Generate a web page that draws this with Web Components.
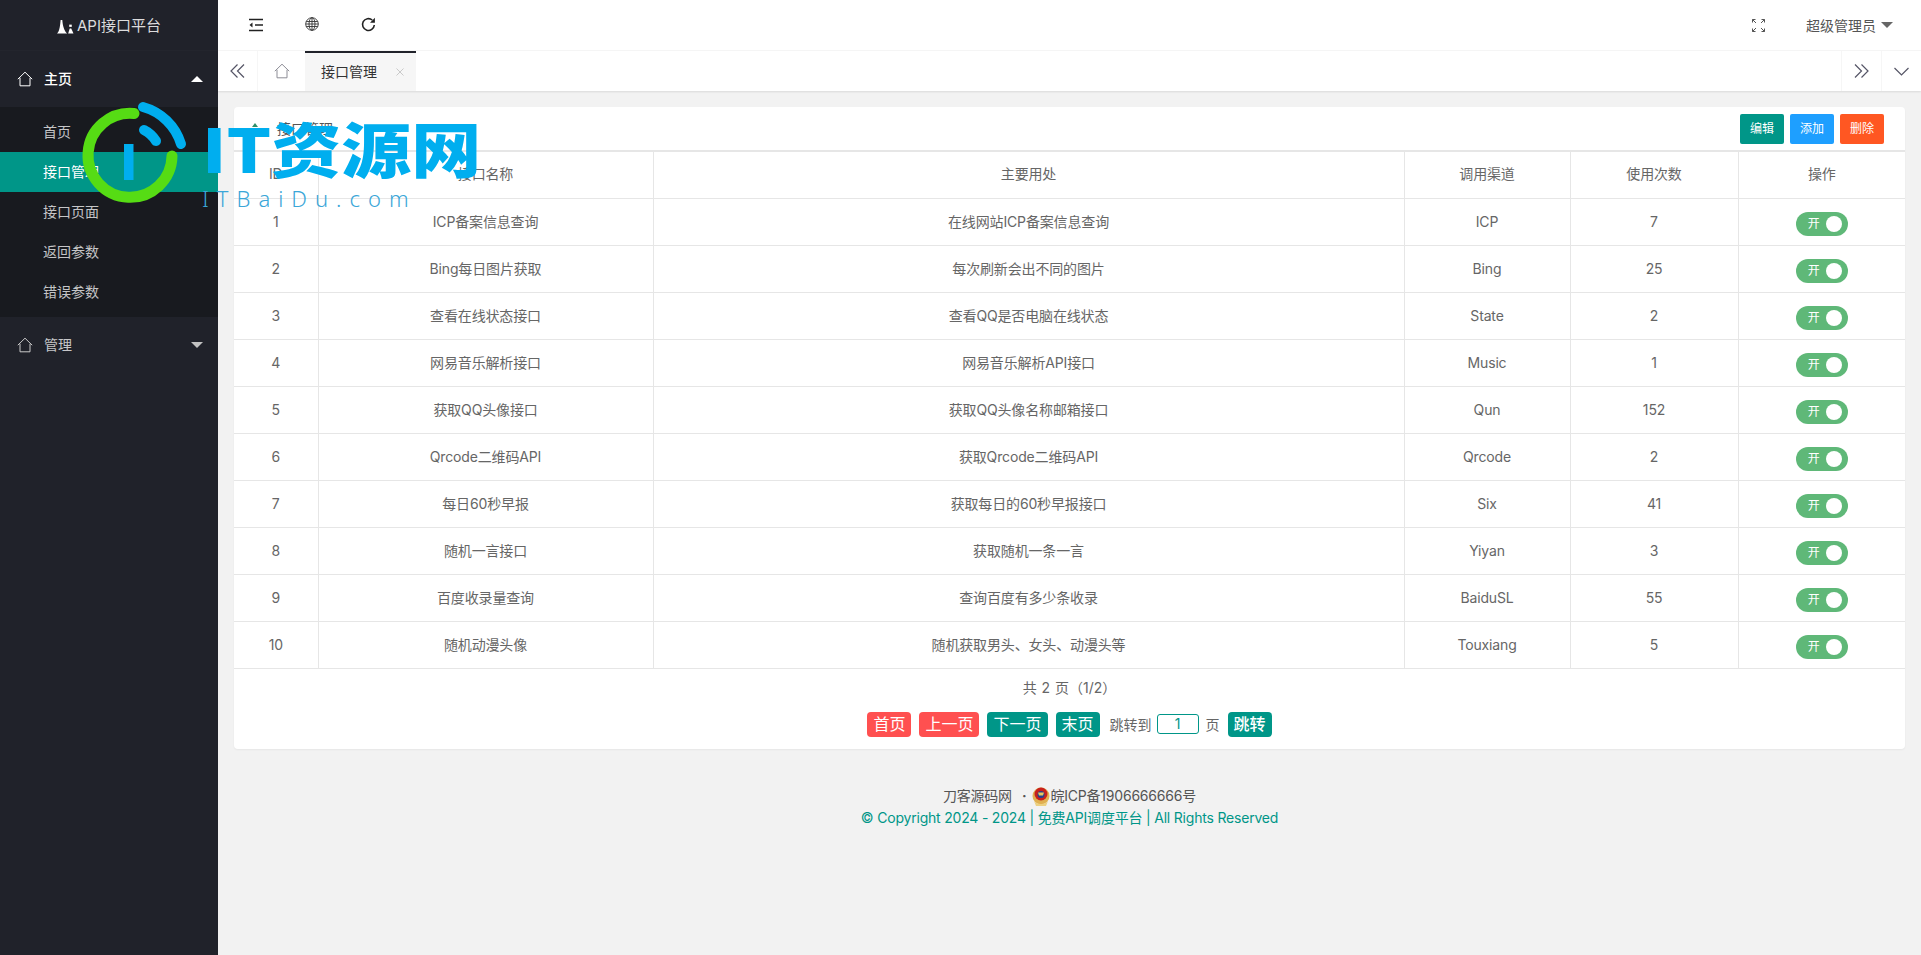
<!doctype html>
<html lang="zh">
<head>
<meta charset="utf-8">
<title>API接口平台</title>
<style>
  html, body { margin: 0; height: 100%; }
  body {
    background: #f2f2f2;
    color: #666;
    font: 14px/1.5 Inter, "Noto Sans CJK SC", "Liberation Sans", sans-serif;
    overflow: hidden;
  }
</style>
</head>
<body>

<template id="admin-shell-template">
  <style>
    :host { display: grid; grid-template-columns: 218px 1fr; height: 955px; }
    main { display: flex; flex-direction: column; min-width: 0; }
  </style>
  <slot name="side"></slot>
  <main><slot></slot></main>
</template>

<template id="side-menu-template">
  <style>
    :host { display: block; background: #20222a; color: #fff; }
    .logo { height: 50px; box-sizing: content-box; display: flex; align-items: center; justify-content: center; gap: 3px; font-size: 15px; color: rgba(255,255,255,.85); border-bottom: 1px solid #23252d; }
    .logo span { padding-top: 2px; }
    svg.logo-mark { width: 17px; height: 15px; margin-top: 3px; }
    .group { height: 56px; display: flex; align-items: center; padding: 0 15px 0 17px; font-size: 14px; color: rgba(255,255,255,.75); }
    .group.open { color: #fff; font-weight: 500; }
    .group svg { width: 16px; height: 16px; margin-right: 11px; }
    .group span { flex: 1; padding-bottom: 2px; }
    .arrow { width: 0; height: 0; border: 6px solid transparent; }
    .up { border-bottom-color: #fff; margin-top: -6px; }
    .down { border-top-color: #c2c2c2; margin-top: 6px; }
    .sub { background: #181a1f; padding: 5px 0; }
    .sub div { height: 40px; line-height: 40px; padding-left: 43px; color: rgba(255,255,255,.75); }
    .sub .on { background: #009688; color: #fff; }
  </style>
  <div class="logo">
    <svg class="logo-mark" viewBox="0 0 16 16" preserveAspectRatio="none" fill="#fff"><path d="M0 15.500C2.500 13 3 6 3.400 1L5 1C5.300 7 7 13 9.500 15.500Z"/><rect x="11.500" y="6" width="2.400" height="2.400"/><path d="M10.500 15.500 12 10 13.400 10 15.500 15.500Z"/></svg>
    <span>API接口平台</span>
  </div>
  <div class="group open">
    <svg viewBox="0 0 16 16" fill="none" stroke="#fff" stroke-width="1"><path d="M.8 8.200 8 1.200l7.200 7M3 6.800v8h10v-8"/></svg>
    <span>主页</span><i class="arrow up"></i>
  </div>
  <div class="sub">
    <div>首页</div><div class="on">接口管理</div><div>接口页面</div><div>返回参数</div><div>错误参数</div>
  </div>
  <div class="group">
    <svg viewBox="0 0 16 16" fill="none" stroke="#c9c9c9" stroke-width="1"><path d="M.8 8.200 8 1.200l7.200 7M3 6.800v8h10v-8"/></svg>
    <span>管理</span><i class="arrow down"></i>
  </div>
</template>

<template id="top-bar-template">
  <style>
    :host { display: flex; height: 50px; background: #fff; align-items: center; border-bottom: 1px solid #f6f6f6; color: #333; }
    svg { display: block; }
    .tool { width: 56px; display: flex; justify-content: center; }
    .left { display: flex; padding-left: 10px; }
    .grow { flex: 1; }
    .user { display: flex; align-items: center; font-size: 14px; color: #555; margin-right: 28px; gap: 5px; }
    .caret { width: 0; height: 0; border: 6px solid transparent; border-top-color: #666; margin-top: 6px; }
    .full { margin-right: 41px; }
  </style>
  <div class="left">
    <div class="tool"><svg width="16" height="16" viewBox="0 0 16 16" fill="none" stroke="#222" stroke-width="1.300"><path d="M1 2.500h14M7 8h8M1 13.500h14"/><path d="M4.500 5.500 1.500 8l3 2.500z" fill="#222" stroke="none"/></svg></div>
    <div class="tool"><svg width="14" height="14" viewBox="0 0 14 14" fill="none" stroke="#333" stroke-width=".9"><circle cx="7" cy="7" r="6.300"/><ellipse cx="7" cy="7" rx="3" ry="6.300"/><path d="M7 .7v12.600M1.200 4.500h11.600M.7 7h12.600M1.200 9.500h11.600"/></svg></div>
    <div class="tool"><svg width="15" height="15" viewBox="0 0 16 16" fill="none" stroke="#222" stroke-width="1.700"><path d="M14.200 8.500A6.300 6.300 0 1 1 12 3.200"/><path d="M14.800 .8v5.200H9.600z" fill="#222" stroke="none"/></svg></div>
  </div>
  <div class="grow"></div>
  <svg class="full" width="13" height="13" viewBox="0 0 13 13" fill="none" stroke="#555" stroke-width="1"><path d="M.5 3.500v-3h3M9.500.5h3v3M12.500 9.500v3h-3M3.500 12.500h-3v-3M.5.5l3.500 3.500M12.500.5 9 4M12.500 12.500 9 9M.5 12.500 4 9"/></svg>
  <div class="user"><span>超级管理员</span><i class="caret"></i></div>
</template>

<template id="tab-bar-template">
  <style>
    :host { display: flex; height: 40px; background: #fff; box-shadow: 0 1px 2px rgba(0,0,0,.1); color: #333; position: relative; }
    .btn { width: 39px; display: flex; align-items: center; justify-content: center; border-right: 1px solid #f6f6f6; }
    .btn.r { border-right: 0; border-left: 1px solid #f6f6f6; }
    .home { width: 47px; display: flex; align-items: center; justify-content: center; }
    .tab { width: 111px; background: #f6f6f6; border-top: 2px solid #20222a; display: flex; align-items: center; padding-left: 16px; box-sizing: border-box; font-size: 14px; }
    .tab span { flex: 1; padding-bottom: 2px; }
    .tab svg { margin-right: 12px; }
    .grow { flex: 1; }
  </style>
  <div class="btn"><svg width="15" height="14" viewBox="0 0 15 14" fill="none" stroke="#556" stroke-width="1.200"><path d="M7.500.5 1 7l6.500 6.500M14 .5 7.500 7l6.500 6.500"/></svg></div>
  <div class="home"><svg width="16" height="16" viewBox="0 0 16 16" fill="none" stroke="#8d8d96" stroke-width="1"><path d="M.8 8.200 8 1.200l7.200 7M3 6.800v8h10v-8"/></svg></div>
  <div class="tab"><span>接口管理</span><svg width="8" height="8" viewBox="0 0 8 8" stroke="#c9c9c9" stroke-width="1"><path d="M.5.5l7 7M7.500.5l-7 7"/></svg></div>
  <div class="grow"></div>
  <div class="btn r"><svg width="15" height="14" viewBox="0 0 15 14" fill="none" stroke="#556" stroke-width="1.200"><path d="M1 .5 7.500 7 1 13.500M7.500.5 14 7l-6.500 6.500"/></svg></div>
  <div class="btn r"><svg width="15" height="9" viewBox="0 0 15 9" fill="none" stroke="#556" stroke-width="1.200"><path d="M.5 1 7.500 8l7-7"/></svg></div>
</template>

<template id="data-card-template">
  <style>
    :host { display: block; margin: 16px 16px 0; background: #fff; border-radius: 4px; box-shadow: 0 1px 2px rgba(0,0,0,.05); }
    .head { height: 43px; display: flex; align-items: center; box-sizing: border-box; padding: 0 21px 0 18px; font-size: 14px; color: #555; }
    .title { flex: 1; display: flex; align-items: center; gap: 19px; }
    .title i { width: 0; height: 0; border: 3px solid transparent; border-bottom: 4px solid #2f8f6a; margin-top: -10px; }
    .actions { display: flex; gap: 6px; }
  </style>
  <div class="head">
    <div class="title"><i></i><span>接口管理</span></div>
    <div class="actions"><slot name="actions"></slot></div>
  </div>
  <slot></slot>
</template>

<template id="mini-button-template">
  <style>
    :host { display: block; width: 44px; height: 30px; border-radius: 2px; line-height: 30px; text-align: center; color: #fff; font-size: 12px; background: var(--bg, #009688); }
  </style>
  <slot></slot>
</template>

<template id="on-switch-template">
  <style>
    :host { display: inline-flex; box-sizing: border-box; width: 52px; height: 24px; margin-top: 5px; border-radius: 12px; background: #5fb878; align-items: center; vertical-align: middle; color: #fff; font-size: 12px; padding: 0 6px 0 12px; justify-content: space-between; }
    i { width: 16px; height: 16px; border-radius: 50%; background: #fff; }
  </style>
  <span>开</span><i></i>
</template>

<template id="api-table-template">
  <style>
    :host { display: block; }
    table { width: 100%; table-layout: fixed; border-collapse: collapse; border-top: 2px solid #e6e6e6; border-bottom: 1px solid #e6e6e6; }
    td, th { height: 47px; padding: 0; box-sizing: border-box; border: 1px solid #e6e6e6; font-weight: 400; text-align: center; font-size: 14px; color: #666; letter-spacing: -.15px; }
    th { padding-bottom: 2px; }
    tr > :first-child { border-left: 0; }
    tr > :last-child { border-right: 0; }
  </style>
  <table>
    <colgroup><col style="width:84px"><col style="width:335px"><col style="width:751px"><col style="width:166px"><col style="width:168px"><col></colgroup>
    <thead><tr><th>ID</th><th>接口名称</th><th>主要用处</th><th>调用渠道</th><th>使用次数</th><th>操作</th></tr></thead>
    <tbody></tbody>
  </table>
</template>

<template id="pager-bar-template">
  <style>
    :host { display: block; text-align: center; height: 80px; font-size: 14px; color: #666; }
    .sum { height: 38px; line-height: 38px; word-spacing: 1px; }
    .row { display: flex; justify-content: center; align-items: center; height: 25px; margin-top: 5px; }
    a { height: 25px; line-height: 24px; padding: 0 6px; border-radius: 4px; color: #fff; font-size: 16px; background: #009688; margin-right: 8px; }
    a.red { background: #ff5050; }
    .to { margin: 0 5px 0 2px; }
    .box { width: 40px; height: 18px; line-height: 18px; border: 1px solid #009688; border-radius: 3px; color: #009688; margin-right: 7px; }
    .ye { margin-right: 8px; }
    a.last { margin-right: 0; font-weight: 500; }
  </style>
  <div class="sum">共 2 页（1/2）</div>
  <div class="row">
    <a class="red">首页</a><a class="red">上一页</a><a>下一页</a><a>末页</a>
    <span class="to">跳转到</span><span class="box">1</span><span class="ye">页</span><a class="last">跳转</a>
  </div>
</template>

<template id="page-footer-template">
  <style>
    :host { display: block; text-align: center; margin-top: 36px; font-size: 14px; line-height: 22px; color: #555; letter-spacing: -.2px; }
    .beian { display: flex; justify-content: center; align-items: center; }
    .dot { margin: 0 6px 0 10px; font-weight: 700; }
    svg { width: 18px; height: 20px; }
    .copy { color: #009688; }
  </style>
  <div class="beian">
    <span>刀客源码网</span><span class="dot">·</span>
    <svg viewBox="0 0 18 20"><circle cx="9" cy="10" r="8.500" fill="#e0b050"/><circle cx="9" cy="8" r="6.500" fill="#c8201c"/><circle cx="9" cy="8.500" r="3.500" fill="#24408e"/><path d="M6 6.500h6l-1 3H7z" fill="#e8c860"/><path d="M2 15c3 4 11 4 14 0l-2 5H4z" fill="#ecd080"/></svg>
    <span>皖ICP备1906666666号</span>
  </div>
  <div class="copy">© Copyright 2024 - 2024 | 免费API调度平台 | All Rights Reserved</div>
</template>

<template id="brand-stamp-template">
  <style>
    :host { position: absolute; left: 80px; top: 98px; width: 420px; height: 116px; display: block; pointer-events: none; z-index: 5; }
    svg { position: absolute; left: 0; top: 0; }
    .big { position: absolute; left: 122px; top: -1px; font: 900 70px/100px "Noto Sans CJK SC", sans-serif; color: #00aeef; white-space: nowrap; transform: scaleY(.86); transform-origin: 0 50%; }
    .small { position: absolute; left: 122px; top: 85px; font: 300 22px/30px "Noto Sans", sans-serif; letter-spacing: 8px; color: #3aa6d8; white-space: nowrap; }
  </style>
  <svg width="110" height="116" viewBox="0 0 110 116" fill="none" stroke-linecap="round">
    <path d="M54 15.500A42 42 0 1 0 92 58" stroke="#56dc14" stroke-width="11"/>
    <path d="M63 9A55 55 0 0 1 101 46" stroke="#00aeef" stroke-width="10"/>
    <path d="M64 32A30 30 0 0 1 76 43" stroke="#00aeef" stroke-width="10"/>
    <rect x="44" y="46" width="9.500" height="36" fill="#00aeef"/>
  </svg>
  <div class="big">IT资源网</div>
  <div class="small">ITBaiDu.com</div>
</template>

<admin-shell>
  <side-menu slot="side"></side-menu>
  <top-bar></top-bar>
  <tab-bar></tab-bar>
  <data-card>
    <mini-button slot="actions" style="--bg:#009688">编辑</mini-button>
    <mini-button slot="actions" style="--bg:#1e9fff">添加</mini-button>
    <mini-button slot="actions" style="--bg:#ff5722">删除</mini-button>
    <api-table></api-table>
    <pager-bar></pager-bar>
  </data-card>
  <page-footer></page-footer>
</admin-shell>
<brand-stamp></brand-stamp>

<script>
  // every element here is just its template in an open shadow root
  function plain(tag) {
    customElements.define(tag, class extends HTMLElement {
      constructor() {
        super();
        const clone = document.getElementById(tag + "-template").content.cloneNode(true);
        this.attachShadow({ mode: "open" }).append(clone);
      }
    });
  }
  ["admin-shell", "side-menu", "top-bar", "tab-bar", "data-card", "mini-button", "on-switch", "pager-bar", "page-footer", "brand-stamp"].forEach(plain);

  const rows = [
    ["ICP备案信息查询", "在线网站ICP备案信息查询", "ICP", 7],
    ["Bing每日图片获取", "每次刷新会出不同的图片", "Bing", 25],
    ["查看在线状态接口", "查看QQ是否电脑在线状态", "State", 2],
    ["网易音乐解析接口", "网易音乐解析API接口", "Music", 1],
    ["获取QQ头像接口", "获取QQ头像名称邮箱接口", "Qun", 152],
    ["Qrcode二维码API", "获取Qrcode二维码API", "Qrcode", 2],
    ["每日60秒早报", "获取每日的60秒早报接口", "Six", 41],
    ["随机一言接口", "获取随机一条一言", "Yiyan", 3],
    ["百度收录量查询", "查询百度有多少条收录", "BaiduSL", 55],
    ["随机动漫头像", "随机获取男头、女头、动漫头等", "Touxiang", 5],
  ];

  customElements.define("api-table", class extends HTMLElement {
    constructor() {
      super();
      const clone = document.getElementById("api-table-template").content.cloneNode(true);
      const body = clone.querySelector("tbody");
      rows.forEach((r, i) => {
        const tr = document.createElement("tr");
        [i + 1, ...r].forEach(v => {
          const td = document.createElement("td");
          td.textContent = v;
          tr.append(td);
        });
        const last = document.createElement("td");
        last.append(document.createElement("on-switch"));
        tr.append(last);
        body.append(tr);
      });
      this.attachShadow({ mode: "open" }).append(clone);
    }
  });
</script>
</body>
</html>
